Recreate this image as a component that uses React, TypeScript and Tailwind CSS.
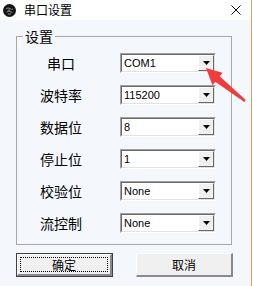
import React from "react";

const cjk = { fontFamily: '"Noto Sans CJK SC", "Noto Sans", sans-serif' };
const latin = { fontFamily: '"Liberation Sans", Arial, sans-serif' };

const rows = [
  { label: "串口", value: "COM1" },
  { label: "波特率", value: "115200" },
  { label: "数据位", value: "8" },
  { label: "停止位", value: "1" },
  { label: "校验位", value: "None" },
  { label: "流控制", value: "None" },
];

function Combo({ value }: { value: string }) {
  return (
    <div className="h-[20px] w-[96px] border border-t-[#a0a0a0] border-l-[#a0a0a0] border-b-white border-r-white">
      <div className="flex h-full border border-t-[#696969] border-l-[#696969] border-b-[#e3e3e3] border-r-[#e3e3e3] bg-white">
        <div className="flex-1 pl-[2px] text-[11px] leading-[16px] text-black" style={latin}>
          {value}
        </div>
        <div className="flex h-full w-[16px] items-center justify-center border border-t-white border-l-white border-b-[#696969] border-r-[#696969] bg-[#f0f0f0]">
          <svg width="7" height="4" viewBox="0 0 7 4">
            <polygon points="0,0 7,0 3.5,4" fill="#000" />
          </svg>
        </div>
      </div>
    </div>
  );
}

export default function App() {
  return (
    <div className="relative flex h-[286px] w-[253px] overflow-hidden bg-white">
      <div className="flex h-full w-[252px] flex-col border-r border-[#e0a060]">
        {/* Title bar */}
        <div className="flex h-[20px] shrink-0 items-center bg-white">
          <svg className="ml-[3px]" width="13" height="13" viewBox="0 0 13 13">
            <circle cx="6.5" cy="6.5" r="6.5" fill="#141414" />
            <path d="M3 5 Q5 3 7 4.5 T10 5 M3.5 8 Q6 6.5 9.5 8.5 M5 10 L8 10" stroke="#8a8a8a" strokeWidth="1" fill="none" />
            <circle cx="6" cy="6.5" r="1.2" fill="#6a6a6a" />
          </svg>
          <span className="ml-[8px] text-[12px] leading-[14px] text-black" style={cjk}>
            串口设置
          </span>
          <svg className="ml-auto mr-[10px]" width="10" height="10" viewBox="0 0 10 10">
            <path d="M0.5 0.5 L9.5 9.5 M9.5 0.5 L0.5 9.5" stroke="#111" strokeWidth="1" />
          </svg>
        </div>

        {/* Body */}
        <div className="flex flex-1 flex-col bg-[#f4f7fc]">
          <fieldset className="ml-[16px] mt-[8px] w-[216px] border border-[#a8a8a8] pb-[11px]">
            <legend className="ml-[6px] px-[2px] text-[14px] leading-[16px] text-black" style={cjk}>
              设置
            </legend>
            <div className="flex flex-col gap-[12px] pt-[9px]">
              {rows.map((r) => (
                <div key={r.label} className="flex items-center">
                  <div className="w-[88px] text-center text-[14px] leading-[16px] text-black" style={cjk}>
                    {r.label}
                  </div>
                  <div className="ml-[15px]">
                    <Combo value={r.value} />
                  </div>
                </div>
              ))}
            </div>
          </fieldset>

          <div className="ml-[16px] mt-[8px] flex gap-[23px]">
            <button className="h-[24px] w-[97px] border border-[#404040] bg-[#f0f0f0] p-0">
              <div className="h-full w-full border-b-2 border-r-2 border-t border-l border-t-white border-l-white border-b-[#8a8a8a] border-r-[#8a8a8a] p-[2px]">
                <div className="flex h-full w-full items-center justify-center border border-dotted border-black text-[12px] leading-[14px] text-black" style={cjk}>
                  确定
                </div>
              </div>
            </button>
            <button className="h-[24px] w-[97px] border-b-2 border-r-2 border-t border-l border-t-white border-l-white border-b-[#8a8a8a] border-r-[#8a8a8a] bg-[#f0f0f0] p-0">
              <div className="flex h-full w-full items-center justify-center text-[12px] leading-[14px] text-black" style={cjk}>
                取消
              </div>
            </button>
          </div>
        </div>
      </div>

      {/* Red annotation arrow */}
      <svg className="pointer-events-none absolute left-0 top-0" width="253" height="286" viewBox="0 0 253 286">
        <polygon
          points="206,68 222.5,72.8 219.7,76.3 245.7,100.1 244.3,101.9 215.3,81.7 212.5,85.2"
          fill="#f23b3b"
        />
      </svg>
    </div>
  );
}
